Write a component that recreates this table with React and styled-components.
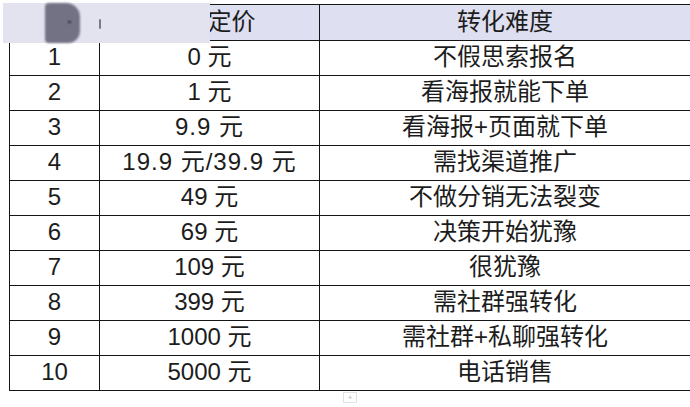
import React from "react";
import styled, { createGlobalStyle } from "styled-components";

const GlobalStyle = createGlobalStyle`
  body {
    margin: 0;
    background: #ffffff;
  }
`;

const Page = styled.div`
  position: relative;
  width: 690px;
  height: 407px;
  overflow: hidden;
  background: #ffffff;
  padding-top: 4px;
  box-sizing: border-box;
  font-family: "Liberation Sans", "Noto Sans CJK SC", sans-serif;
  color: #1c1c1c;
`;

const Table = styled.div`
  margin-left: 9px;
  width: 681px;
`;

const Row = styled.div`
  display: grid;
  grid-template-columns: 90px 220px 1fr;
  height: ${(p) => (p.$head ? "37px" : "35px")};
  box-sizing: border-box;
  border-top: ${(p) => (p.$head ? "1px solid #151515" : "none")};
  border-bottom: 1px solid #151515;
  background: ${(p) => (p.$head ? "#dedff0" : "#ffffff")};
`;

const Cell = styled.div`
  display: flex;
  align-items: center;
  justify-content: center;
  border-left: 1px solid #151515;
  font-size: 24px;
  line-height: 1;
  padding-left: ${(p) => p.$shift || 0}px;
  padding-bottom: 2px;
  letter-spacing: ${(p) => (p.$spaced ? "1px" : "0")};
  white-space: nowrap;
`;

const Patch = styled.div`
  position: absolute;
  top: 3px;
  left: 3px;
  width: 207px;
  height: 40px;
  background: #e3e3f0;
`;

const Blob = styled.div`
  position: absolute;
  top: 0;
  left: 42px;
  width: 35px;
  height: 40px;
  background: #727284;
  border-radius: 4px 14px 12px 4px;
  filter: blur(0.8px);

  &::after {
    content: "";
    position: absolute;
    left: 23px;
    top: 18px;
    width: 3px;
    height: 2px;
    background: #2a2a33;
  }
`;

const Tick = styled.div`
  position: absolute;
  top: 16px;
  left: 96px;
  width: 2px;
  height: 10px;
  background: #7a7a8a;
  border-radius: 1px;
  filter: blur(0.5px);
`;

const Marker = styled.div`
  position: absolute;
  left: 343px;
  top: 392px;
  width: 14px;
  height: 11px;
  border: 1px solid #e2e2e2;
  box-sizing: border-box;
  font-size: 8px;
  line-height: 9px;
  text-align: center;
  color: #b5b5b5;
  font-family: "Liberation Sans", sans-serif;
`;

const rows = [
  ["1", "0 元", "不假思索报名"],
  ["2", "1 元", "看海报就能下单"],
  ["3", "9.9 元", "看海报+页面就下单", true],
  ["4", "19.9 元/39.9 元", "需找渠道推广", true],
  ["5", "49 元", "不做分销无法裂变"],
  ["6", "69 元", "决策开始犹豫"],
  ["7", "109 元", "很犹豫"],
  ["8", "399 元", "需社群强转化"],
  ["9", "1000 元", "需社群+私聊强转化"],
  ["10", "5000 元", "电话销售"],
];

export default function App() {
  return (
    <Page>
      <GlobalStyle />
      <Table>
        <Row $head>
          <Cell />
          <Cell $shift={44}>定价</Cell>
          <Cell>转化难度</Cell>
        </Row>
        {rows.map(([n, price, level, spaced]) => (
          <Row key={n}>
            <Cell>{n}</Cell>
            <Cell $spaced={spaced}>{price}</Cell>
            <Cell>{level}</Cell>
          </Row>
        ))}
      </Table>
      <Patch>
        <Blob />
        <Tick />
      </Patch>
      <Marker>+</Marker>
    </Page>
  );
}
